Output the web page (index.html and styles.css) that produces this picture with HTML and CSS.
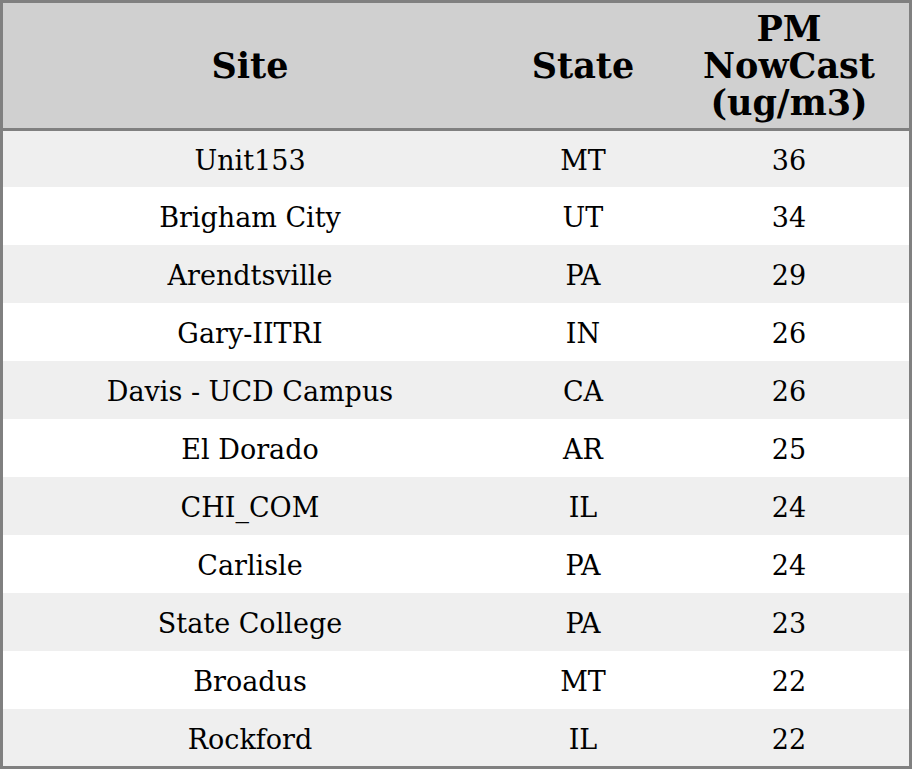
FILE: index.html
```html
<!DOCTYPE html>
<html>
<head>
<meta charset="utf-8">
<link rel="stylesheet" href="styles.css">
</head>
<body>
<table class="aq">
  <colgroup>
    <col class="c-site">
    <col class="c-state">
    <col class="c-pm">
  </colgroup>
  <thead>
    <tr><th>Site</th><th>State</th><th>PM<br>NowCast<br>(ug/m3)</th></tr>
  </thead>
  <tbody>
    <tr><td>Unit153</td><td>MT</td><td>36</td></tr>
    <tr><td>Brigham City</td><td>UT</td><td>34</td></tr>
    <tr><td>Arendtsville</td><td>PA</td><td>29</td></tr>
    <tr><td>Gary-IITRI</td><td>IN</td><td>26</td></tr>
    <tr><td>Davis - UCD Campus</td><td>CA</td><td>26</td></tr>
    <tr><td>El Dorado</td><td>AR</td><td>25</td></tr>
    <tr><td>CHI_COM</td><td>IL</td><td>24</td></tr>
    <tr><td>Carlisle</td><td>PA</td><td>24</td></tr>
    <tr><td>State College</td><td>PA</td><td>23</td></tr>
    <tr><td>Broadus</td><td>MT</td><td>22</td></tr>
    <tr><td>Rockford</td><td>IL</td><td>22</td></tr>
  </tbody>
</table>
</body>
</html>
```
FILE: styles.css
```css
html, body {
  margin: 0;
  padding: 0;
  background: #ffffff;
}
.aq {
  width: 912px;
  border-collapse: separate;
  border-spacing: 0;
  border: 3px solid #808080;
  font-family: "DejaVu Serif", serif;
  color: #000;
  table-layout: fixed;
}
.c-site { width: 494px; }
.c-state { width: 172px; }
.c-pm { width: 240px; }
.aq th {
  background: #d0d0d0;
  font-size: 35px;
  font-weight: bold;
  height: 125px;
  padding: 0;
  text-align: center;
  vertical-align: middle;
  border-bottom: 3px solid #808080;
  line-height: 37px;
}
.aq td {
  font-size: 27px;
  line-height: 32px;
  height: 54px;
  padding: 4px 0 0;
  text-align: center;
  vertical-align: middle;
}
.aq tbody tr:first-child td {
  height: 52px;
}
.aq tbody tr:last-child td {
  height: 53px;
}
.aq tbody tr:nth-child(odd) td {
  background: #efefef;
}
```
